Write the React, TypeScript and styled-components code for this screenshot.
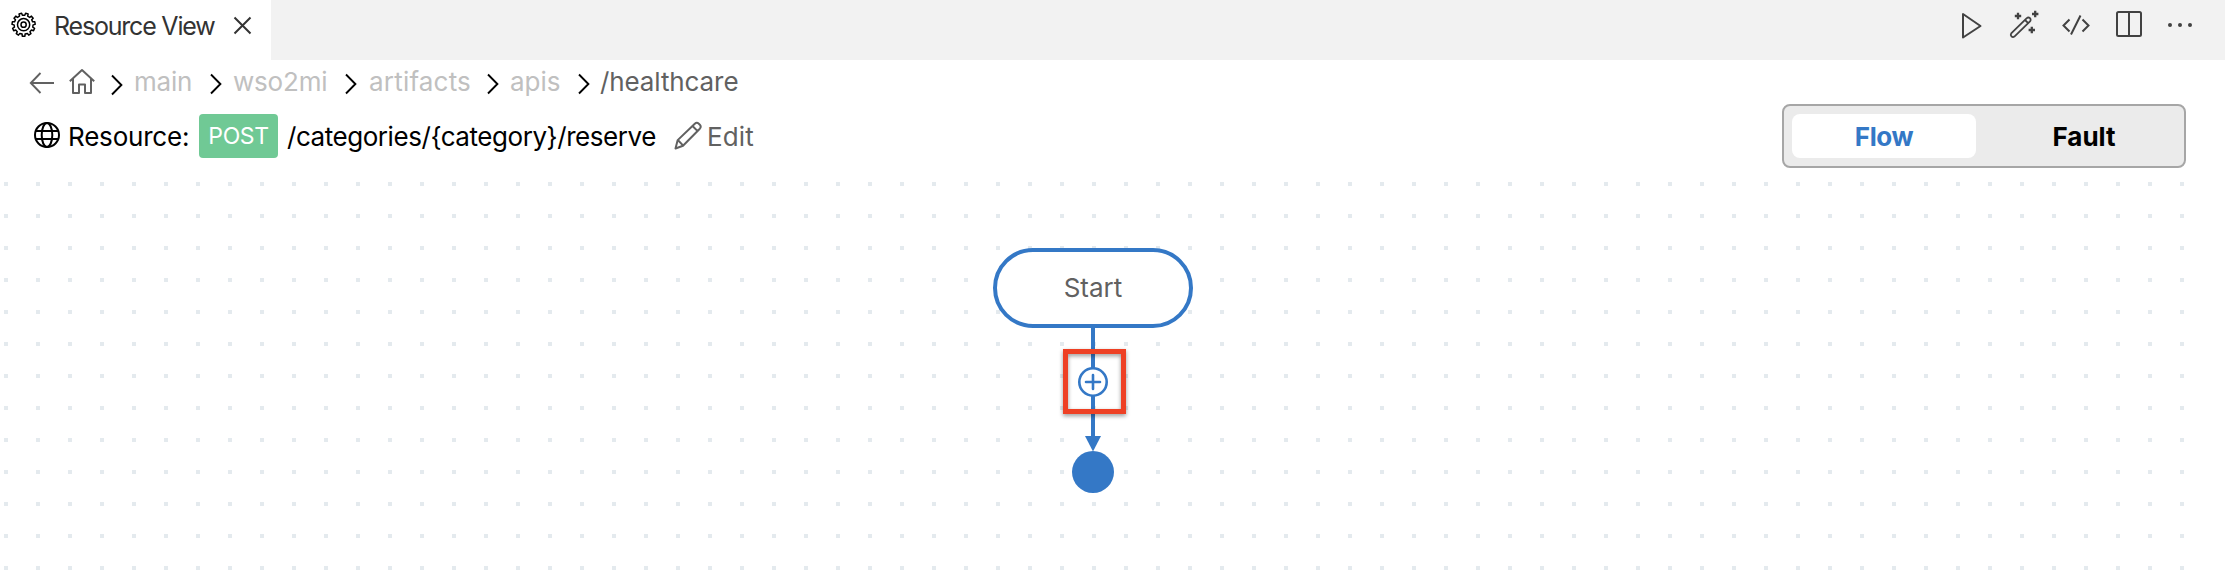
import React from "react";
import styled, { createGlobalStyle } from "styled-components";

const BLUE = "#3478c6";
const MUTED = "#c0c0c0";

const GlobalStyle = createGlobalStyle`
  * { box-sizing: border-box; }
  body { margin: 0; background: #fff; overflow: hidden; }
`;

const Page = styled.main`
  display: flex;
  flex-direction: column;
  width: 2225px;
  height: 581px;
  background: #fff;
  font-family: Inter, "Liberation Sans", sans-serif;
  font-size: 25px;
  color: #000;
`;

const TabBar = styled.header`
  display: flex;
  justify-content: space-between;
  flex: none;
  height: 60px;
  background: #f2f2f2;
`;

const Tab = styled.div`
  display: flex;
  align-items: flex-start;
  width: 271px;
  padding: 11px 0 0 11px;
  background: #fff;
`;

const Actions = styled.div`
  display: flex;
  padding: 9px 27px 0 0;
  gap: 21px;
`;

const Icon = styled.svg<{ $color?: string; $weight?: number }>`
  flex: none;
  display: block;
  fill: none;
  stroke: ${(p) => p.$color ?? "#000"};
  stroke-width: ${(p) => p.$weight ?? 2};
`;

const Label = styled.span<{ $width?: number; $color?: string; $tracking?: number; $size?: number }>`
  flex: none;
  display: block;
  width: ${(p) => (p.$width ? `${p.$width}px` : "auto")};
  font-size: ${(p) => p.$size ?? 26}px;
  line-height: 30px;
  letter-spacing: ${(p) => p.$tracking ?? 0}px;
  color: ${(p) => p.$color ?? "#000"};
  white-space: nowrap;
`;

const Breadcrumbs = styled.nav`
  display: flex;
  flex: none;
  height: 44px;
  padding: 7px 0 0 29px;
`;

const Crumb = styled.div<{ $width: number; $gap: number; $drop?: number }>`
  display: flex;
  flex: none;
  width: ${(p) => p.$width}px;
  gap: ${(p) => p.$gap}px;
  & > svg { margin-top: ${(p) => p.$drop ?? 6}px; }
`;

const TitleRow = styled.section`
  display: flex;
  flex: none;
  height: 68px;
  padding-left: 33px;
`;

const TitleText = styled.div`
  display: flex;
  padding-top: 18px;
`;

const Method = styled.div`
  display: flex;
  align-items: center;
  justify-content: center;
  width: 79px;
  height: 44px;
  margin: 10px 9px 0 0;
  border-radius: 4px;
  background: #70c995;
`;

const Toggle = styled.div`
  display: flex;
  gap: 16px;
  width: 404px;
  height: 64px;
  margin: 0 39px 0 auto;
  padding: 8px;
  border: 2px solid #a6a6a6;
  border-radius: 8px;
  background: #ebebeb;
`;

const ToggleOption = styled.button<{ $active?: boolean }>`
  width: 184px;
  height: 44px;
  padding: 0;
  border: 0;
  border-radius: 8px;
  background: ${(p) => (p.$active ? "#fff" : "transparent")};
  color: ${(p) => (p.$active ? BLUE : "#000")};
  font: 700 26px Inter, "Liberation Sans", sans-serif;
  letter-spacing: ${(p) => (p.$active ? -0.4 : 0)}px;
`;

const Canvas = styled.section`
  position: relative;
  flex: 1;
  width: 2185px;
  background-image: conic-gradient(from 90deg at 28px 28px, #e4eaee 25%, transparent 0);
  background-size: 32px 32px;
  background-position: -24px -18px;
`;

const StartNode = styled.div`
  position: absolute;
  left: 993px;
  top: 76px;
  display: flex;
  align-items: center;
  justify-content: center;
  width: 200px;
  height: 80px;
  border: 4px solid ${BLUE};
  border-radius: 40px;
  background: #fff;
`;

const Link = styled.svg`
  position: absolute;
  left: 1063px;
  top: 156px;
`;

const Highlight = styled.div`
  position: absolute;
  left: 1063px;
  top: 177px;
  width: 63px;
  height: 65px;
  border: 5px solid #ee4024;
  filter: drop-shadow(0 2px 2px rgba(0, 0, 0, 0.4));
`;

const Spaced = styled.div<{ $right?: number; $top?: number }>`
  flex: none;
  margin: ${(p) => p.$top ?? 0}px ${(p) => p.$right ?? 0}px 0 0;
`;

const gearPath = (() => {
  const teeth = 11;
  const step = (Math.PI * 2) / teeth;
  const at = (r: number, a: number) =>
    `${(13 + r * Math.cos(a)).toFixed(2)} ${(13 + r * Math.sin(a)).toFixed(2)}`;
  let d = "";
  for (let i = 0; i < teeth; i++) {
    const a = i * step - Math.PI / 2 + step / 2;
    d += `${i ? "L" : "M"}${at(9.5, a - step * 0.28)}L${at(11.6, a - step * 0.2)}L${at(11.6, a + step * 0.2)}L${at(9.5, a + step * 0.28)}`;
  }
  return d + "Z";
})();

const Separator = () => (
  <Icon width="12" height="22" viewBox="0 0 12 22" $weight={1.9}>
    <path d="M1 1.5l9.4 9.5L1 20.5" />
  </Icon>
);

const crumbs = [
  { text: "main", width: 99, gap: 11, tracking: -0.2, drop: 7 },
  { text: "wso2mi", width: 135, gap: 11, tracking: -0.2 },
  { text: "artifacts", width: 142, gap: 12, tracking: 0.2 },
  { text: "apis", width: 91, gap: 11, tracking: 0 },
  { text: "/healthcare", width: 170, gap: 10, tracking: -0.1, color: "#616161" },
];

export default function App() {
  return (
    <Page>
      <GlobalStyle />
      <TabBar>
        <Tab>
          <Spaced $right={17} $top={1}>
            <Icon width="26" height="26" viewBox="0.4 0.3 26 26" $weight={1.5}>
              <path d={gearPath} strokeLinejoin="round" />
              <circle cx="13" cy="13" r="6.1" />
              <circle cx="13" cy="13" r="2.6" />
            </Icon>
          </Spaced>
          <Label $width={179} $size={25} $color="#333" $tracking={-1.2}>Resource View</Label>
          <Spaced $top={5}>
            <Icon width="19" height="19" viewBox="0 0 19 19" $color="#333">
              <path d="M1.5 1.5l16 16M17.5 1.5l-16 16" />
            </Icon>
          </Spaced>
        </Tab>
        <Actions>
          <Icon width="32" height="32" viewBox="0 0 32 32" $color="#424242">
            <path d="M9 5v23.5L26.5 17z" strokeLinejoin="round" />
          </Icon>
          <Icon width="32" height="32" viewBox="0 0 32 32" $color="#424242" $weight={1.8}>
            <path d="M4.2 24.4L19.8 9.2a2.2 2.2 0 0 1 3.2 3.1L7.4 27.6a2.3 2.3 0 0 1-3.2-3.2zM18 11l3.2 3.1" />
            <path d="M7.8 7h6.4M11 3.8v6.4M25 5h6.4M28.2 1.8v6.4M21.6 21H28M24.8 17.8v6.4" strokeWidth="2.3" />
          </Icon>
          <Icon width="32" height="32" viewBox="0 0 32 32" $color="#424242">
            <path d="M9.5 10.5L3.5 16.5l6 6M22.5 10.5l6 6-6 6M20.5 6.5l-9.5 19" />
          </Icon>
          <Icon width="32" height="32" viewBox="0 0 32 32" $color="#424242">
            <rect x="4" y="3" width="24" height="24" rx="1.5" />
            <path d="M16 3v24" />
          </Icon>
          <Icon width="32" height="32" viewBox="0 0 32 32" $color="none">
            <g fill="#424242">
              <circle cx="4" cy="16" r="2" />
              <circle cx="14" cy="16" r="2" />
              <circle cx="24" cy="16" r="2" />
            </g>
          </Icon>
        </Actions>
      </TabBar>

      <Breadcrumbs>
        <Spaced $right={14} $top={4}>
          <Icon width="26" height="24" viewBox="0 0 26 24" $color="#616161" $weight={1.9}>
            <path d="M25 12H2M11.5 2L1.8 12l9.7 10" />
          </Icon>
        </Spaced>
        <Spaced $right={15}>
          <Icon width="27" height="28" viewBox="0 0 27 28" $color="#616161">
            <path d="M.8 14.2L13 3l12.2 11.2M4 11.7V26h6v-8.4h6V26h6V11.7" strokeLinejoin="round" />
          </Icon>
        </Spaced>
        {crumbs.map((c) => (
          <Crumb key={c.text} $width={c.width} $gap={c.gap} $drop={c.drop}>
            <Separator />
            <Label $color={c.color ?? MUTED} $tracking={c.tracking}>{c.text}</Label>
          </Crumb>
        ))}
      </Breadcrumbs>

      <TitleRow>
        <Spaced $right={7} $top={17}>
          <Icon width="28" height="28" viewBox="0 0 28 28">
            <circle cx="14" cy="14" r="12" />
            <ellipse cx="14" cy="14" rx="5.3" ry="12" />
            <path d="M3 10h22M3 18h22" />
          </Icon>
        </Spaced>
        <TitleText>
          <Label $width={131} $tracking={-0.2}>Resource:</Label>
        </TitleText>
        <Method>
          <Label $size={23} $color="#fff" $tracking={-0.4}>POST</Label>
        </Method>
        <TitleText>
          <Label $width={387} $tracking={-0.45}>/categories/{"{category}"}/reserve</Label>
          <Spaced $right={3} $top={-1}>
            <Icon width="30" height="30" viewBox="0 0 30 30" $color="#616161">
              <path d="M1.5 27.5l2.2-8.4L20.8 2.7q2-1.8 4 0l1 1q1.8 2 0 4L9 24.8zM3.8 19l5.2 5.4M18.5 5l5.4 5.4" strokeLinejoin="round" />
            </Icon>
          </Spaced>
          <Label $color="#616161" $tracking={0.1}>Edit</Label>
        </TitleText>
        <Toggle>
          <ToggleOption $active>Flow</ToggleOption>
          <ToggleOption>Fault</ToggleOption>
        </Toggle>
      </TitleRow>

      <Canvas>
        <StartNode>
          <Label $color="#616161">Start</Label>
        </StartNode>
        <Link width="60" height="170" viewBox="0 0 60 170" fill="none" stroke={BLUE}>
          <path d="M30 0v112" strokeWidth="4" />
          <path d="M22 108h16l-8 15.5z" fill={BLUE} stroke="none" />
          <circle cx="30" cy="144" r="21" fill={BLUE} stroke="none" />
          <circle cx="30" cy="54" r="13.7" fill="#fff" strokeWidth="2.6" />
          <path d="M23 54h14M30 47v14" strokeWidth="2.6" strokeLinecap="round" />
        </Link>
        <Highlight />
      </Canvas>
    </Page>
  );
}
